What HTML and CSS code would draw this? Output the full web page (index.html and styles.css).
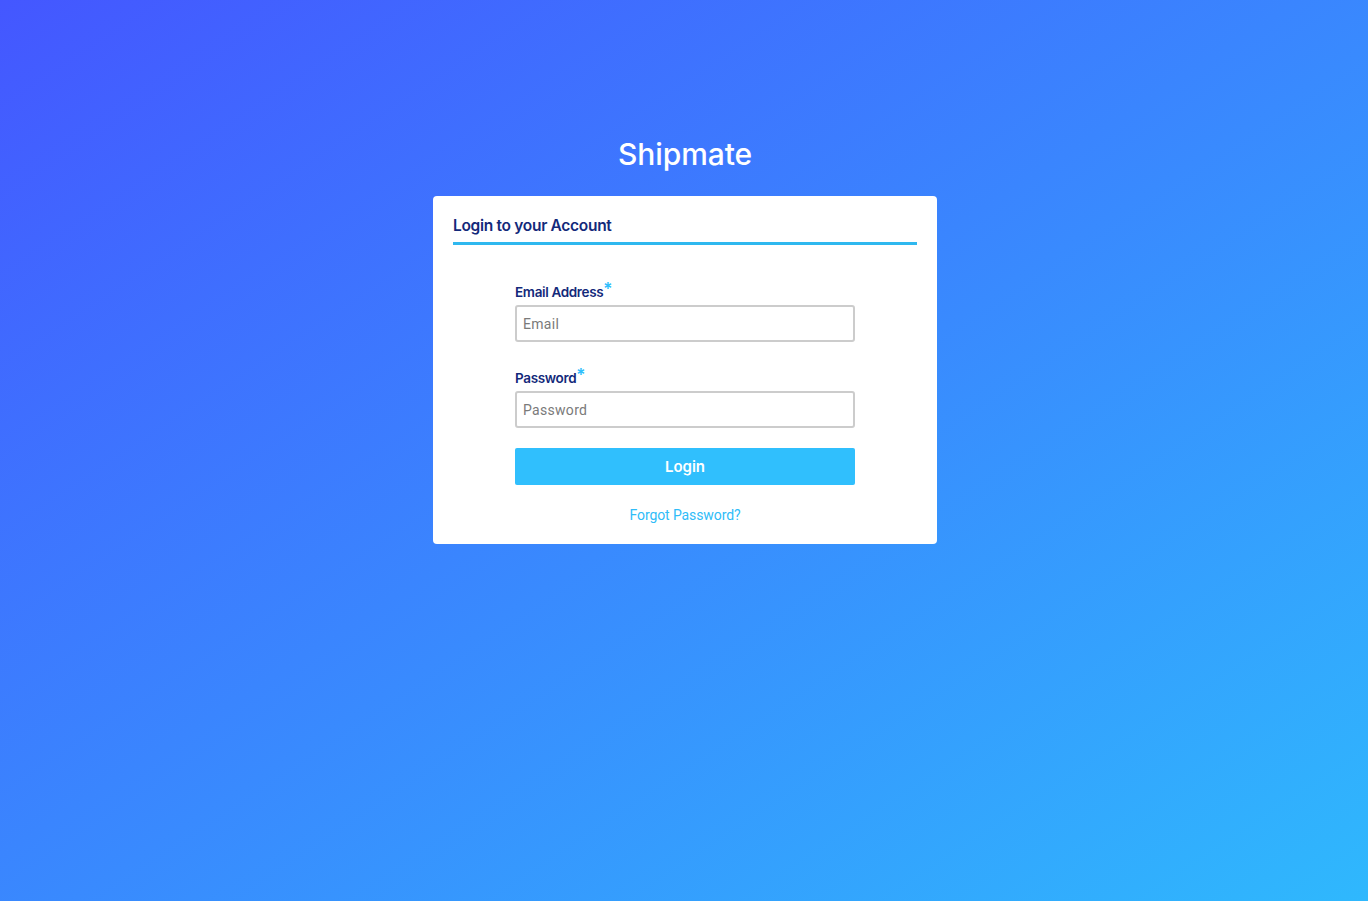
FILE: index.html
```html
<!DOCTYPE html>
<html>
<head>
<meta charset="utf-8">
<title>Shipmate</title>
<link rel="stylesheet" href="styles.css">
</head>
<body>
<main class="page">
  <h1 class="brand">Shipmate</h1>
  <section class="card">
    <h2 class="card-title">Login to your Account</h2>
    <form class="form">
      <label class="label" for="email">Email Address<span class="req">*</span></label>
      <input class="input" id="email" type="text" placeholder="Email">
      <label class="label label-2" for="pw">Password<span class="req">*</span></label>
      <input class="input" id="pw" type="password" placeholder="Password">
      <button class="btn" type="button">Login</button>
      <a class="forgot" href="#">Forgot Password?</a>
    </form>
  </section>
</main>
</body>
</html>
```
FILE: styles.css
```css
html, body {
  margin: 0;
  height: 100%;
}
body {
  background: linear-gradient(to bottom right, #4457ff, #2fb8fd);
  font-family: Inter, "Liberation Sans", sans-serif;
}
.page {
  display: flex;
  flex-direction: column;
  align-items: center;
  padding-top: 134px;
  padding-left: 2px;
}
.brand {
  margin: 0 0 22px;
  font-size: 30px;
  line-height: 40px;
  font-weight: 500;
  color: #fff;
  letter-spacing: -0.1px;
}
.card {
  width: 504px;
  box-sizing: border-box;
  background: #fff;
  border-radius: 4px;
  padding: 20px 20px 20px;
}
.card-title {
  margin: 0;
  font-size: 15.5px;
  line-height: 20px;
  font-weight: 600;
  color: #13297a;
  padding-bottom: 6px;
  border-bottom: 3px solid #2fb8ef;
  letter-spacing: -0.3px;
}
.form {
  width: 340px;
  margin: 38px auto 0;
  display: flex;
  flex-direction: column;
}
.label {
  font-size: 13.5px;
  line-height: 18px;
  font-weight: 600;
  color: #13297a;
  margin-bottom: 4px;
  letter-spacing: -0.35px;
}
.label-2 {
  margin-top: 27px;
}
.req {
  color: #2fbefc;
  font-size: 17px;
  line-height: 10px;
  position: relative;
  top: -2px;
  margin-left: 0;
}
.input {
  height: 37px;
  box-sizing: border-box;
  border: 2px solid #cccccc;
  border-radius: 3px;
  padding: 0 6px;
  font-family: Roboto, "Liberation Sans", sans-serif;
  font-size: 14px;
  color: #333;
  outline: none;
}
.input::placeholder {
  color: #7a7a7a;
  letter-spacing: 0.3px;
}
.btn {
  margin-top: 20px;
  height: 37px;
  border: none;
  border-radius: 2px;
  background: #30bffd;
  color: #fff;
  font-family: Inter, "Liberation Sans", sans-serif;
  font-size: 15px;
  font-weight: 600;
  cursor: pointer;
}
.forgot {
  margin-top: 21px;
  text-align: center;
  font-family: Roboto, "Liberation Sans", sans-serif;
  font-size: 14px;
  line-height: 18px;
  color: #2fbcf8;
  text-decoration: none;
  letter-spacing: -0.1px;
}
```
